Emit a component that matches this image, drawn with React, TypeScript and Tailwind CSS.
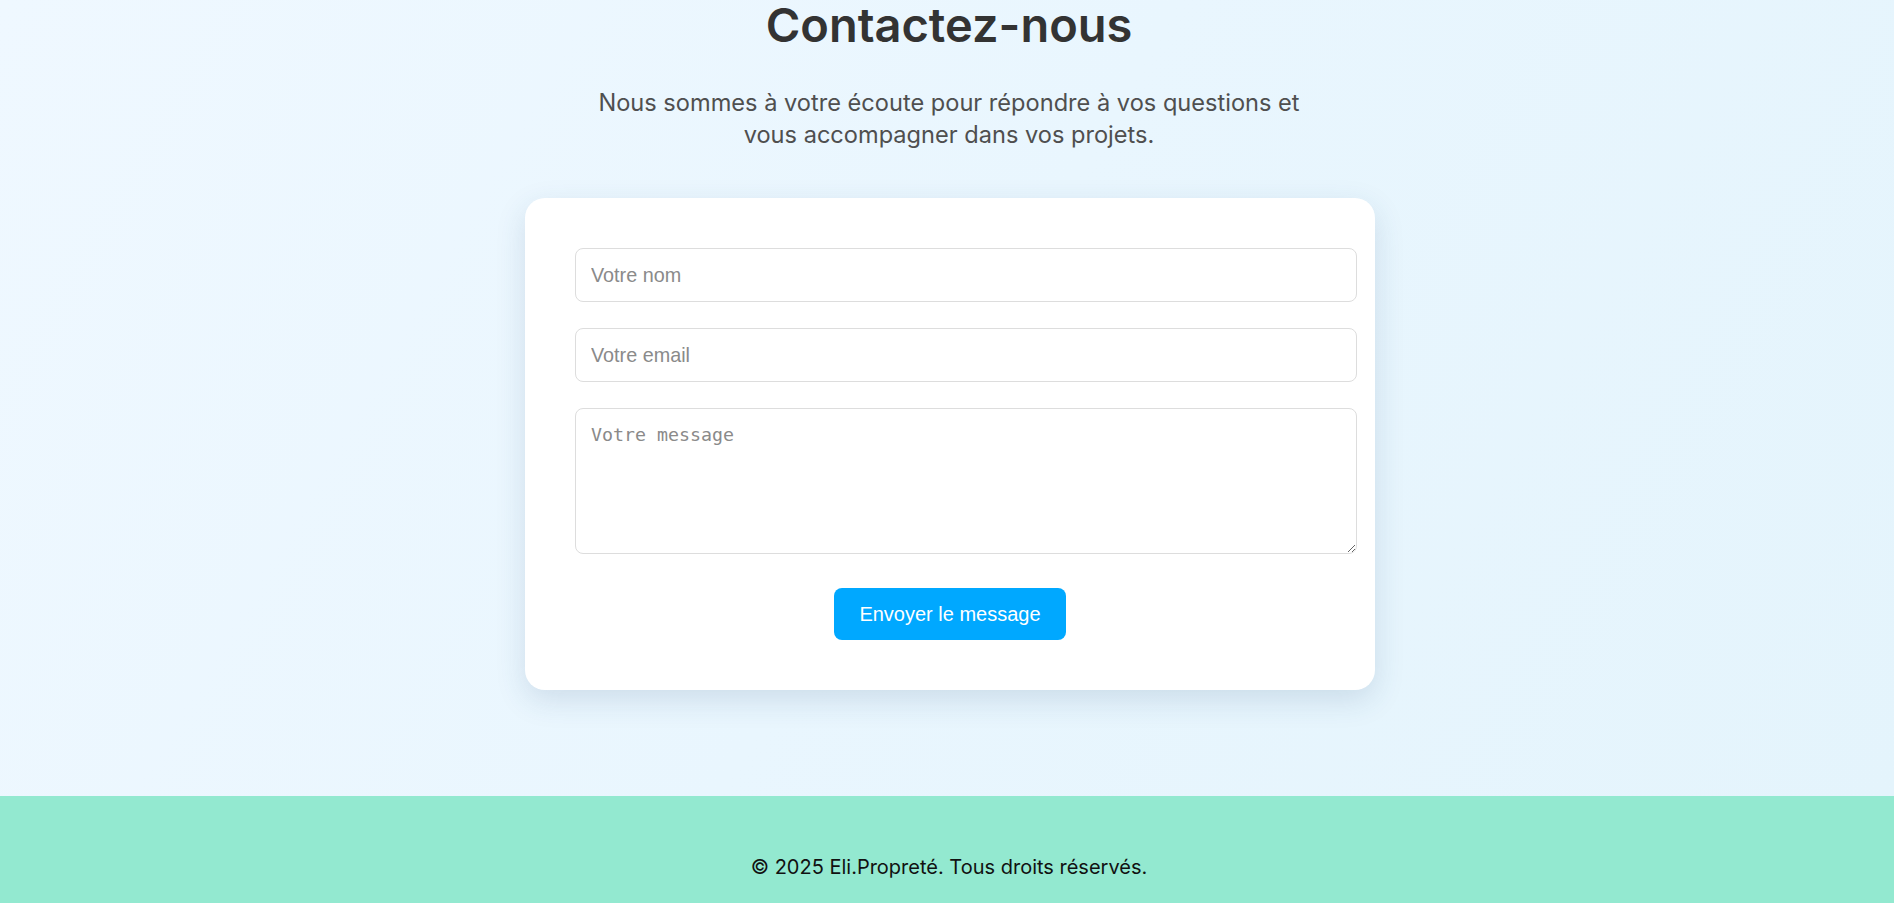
import React from "react";

export default function App() {
  return (
    <div className="w-full min-h-screen flex flex-col">
      <section className="flex flex-col items-center bg-[linear-gradient(120deg,#eff8ff_0%,#e9f6fe_50%,#e4f4fc_100%)] pb-[106px]">
        <h1 className="ml-[4px] text-[47px] leading-[50px] font-semibold text-[#333333] text-center m-0 [font-family:Inter,'Noto_Sans',sans-serif]">
          Contactez-nous
        </h1>
        <p className="ml-[4px] mt-[37px] text-[23.6px] leading-[32px] text-[#4f4f4f] text-center [font-family:Inter,'Noto_Sans',sans-serif]">
          Nous sommes à votre écoute pour répondre à vos questions et
          <br />
          vous accompagner dans vos projets.
        </p>
        <div className="ml-[6px] mt-[47px] w-[850px] bg-white rounded-[20px] px-[50px] py-[50px] shadow-[0_10px_30px_rgba(40,80,120,0.15)]">
          <form className="flex flex-col" onSubmit={(e) => e.preventDefault()}>
            <input
              type="text"
              placeholder="Votre nom"
              className="w-[782px] max-w-none h-[54px] mb-[26px] px-[15px] border border-[#dddddd] rounded-[8px] text-[19.8px] text-[#333] placeholder:text-[#8a8a8a] bg-white outline-none [font-family:'Liberation_Sans',Arial,sans-serif]"
            />
            <input
              type="email"
              placeholder="Votre email"
              className="w-[782px] max-w-none h-[54px] mb-[26px] px-[15px] border border-[#dddddd] rounded-[8px] text-[19.8px] text-[#333] placeholder:text-[#8a8a8a] bg-white outline-none [font-family:'Liberation_Sans',Arial,sans-serif]"
            />
            <textarea
              placeholder="Votre message"
              className="block w-[782px] max-w-none h-[146px] p-[15px] border border-[#dddddd] rounded-[8px] text-[18.3px] leading-[22px] text-[#333] placeholder:text-[#8a8a8a] bg-white outline-none resize-y [font-family:'DejaVu_Sans_Mono',monospace]"
            />
            <div className="mt-[34px] flex justify-center">
              <button
                type="submit"
                className="h-[52px] px-[25px] bg-[#00a8ff] text-white text-[20px] rounded-[8px] border-0 cursor-pointer [font-family:'Liberation_Sans',Arial,sans-serif]"
              >
                Envoyer le message
              </button>
            </div>
          </form>
        </div>
      </section>
      <footer className="bg-[#93e9d0] pt-[57px] pb-[58px] text-center">
        <p className="ml-[4px] text-[20px] leading-[28px] text-[#111] [font-family:Inter,'Noto_Sans',sans-serif]">
          © 2025 Eli.Propreté. Tous droits réservés.
        </p>
      </footer>
    </div>
  );
}
